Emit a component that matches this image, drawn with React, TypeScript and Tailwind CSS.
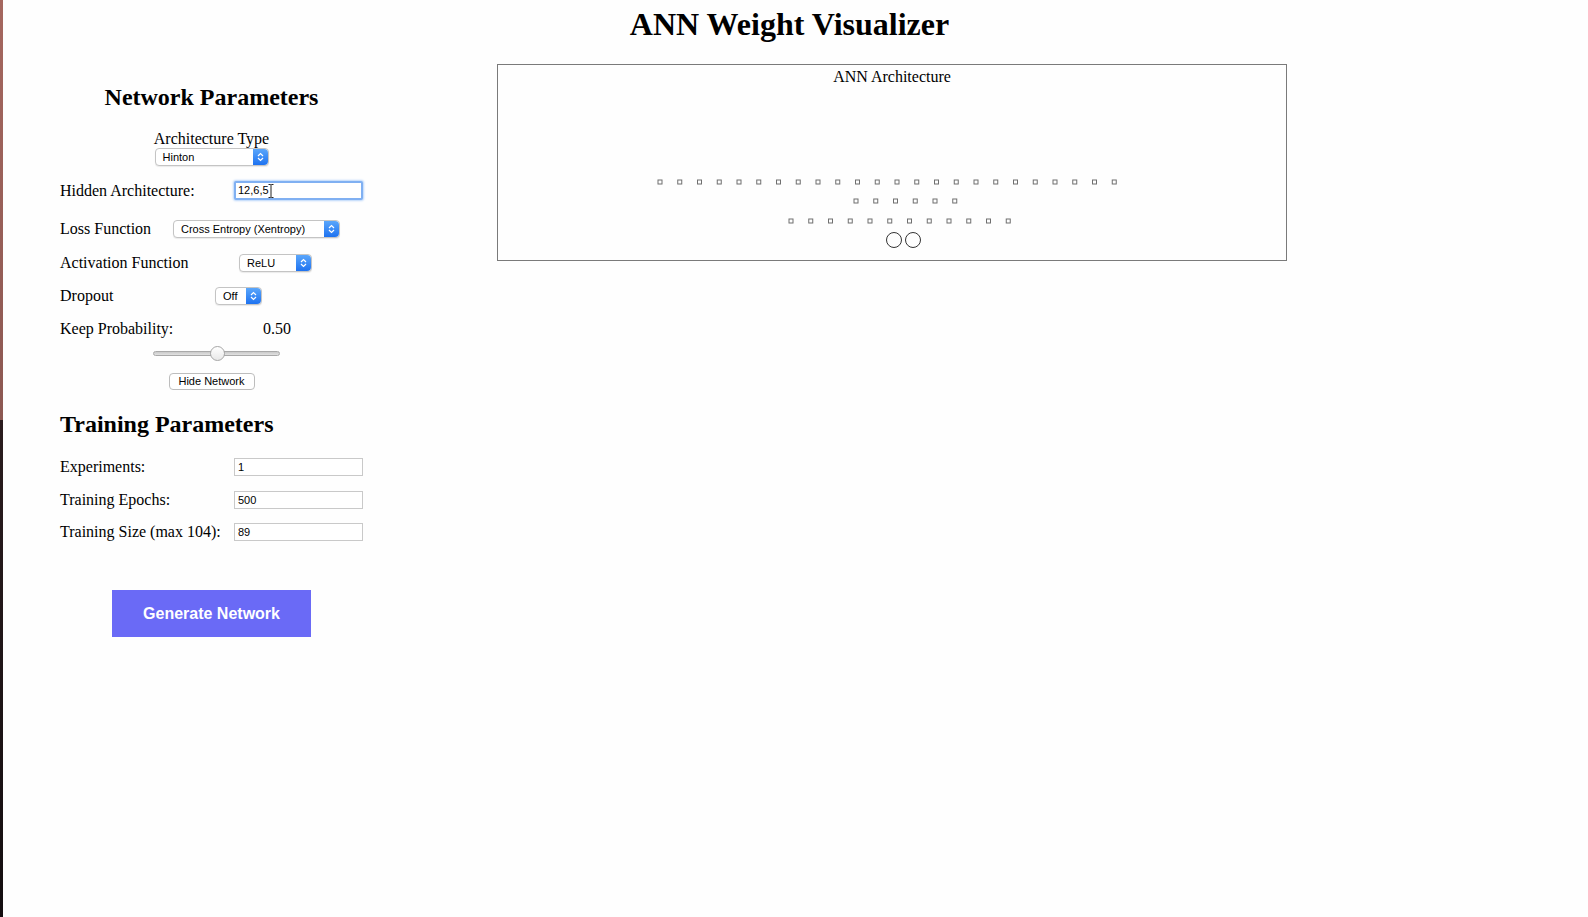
import React from 'react'

const serif = { fontFamily: '"Liberation Serif", "Times New Roman", serif' }
const sans = { fontFamily: '"Liberation Sans", Arial, sans-serif' }

// node rows as seen in the architecture box (x coordinates relative to box)
const rows = [
  { count: 24, start: 162, y: 96 },
  { count: 6, start: 358, y: 115 },
  { count: 12, start: 293, y: 135 },
]

function Stepper() {
  return (
    <div className="flex h-full w-[15px] items-center justify-center rounded-r-[4px] bg-gradient-to-b from-[#5aa6fb] to-[#1d72f0]">
      <svg width="7" height="10" viewBox="0 0 7 10" fill="none">
        <path d="M1 4 L3.5 1.5 L6 4" stroke="white" strokeWidth="1.2" />
        <path d="M1 6 L3.5 8.5 L6 6" stroke="white" strokeWidth="1.2" />
      </svg>
    </div>
  )
}

function Select({ value, width }: { value: string; width: string }) {
  return (
    <div
      className={`flex h-[18px] ${width} items-center rounded-[4px] border border-[#c4c4c4] bg-white shadow-[0_1px_1px_rgba(0,0,0,0.08)]`}
    >
      <span className="flex-1 truncate pl-[7px] text-[11px] leading-none text-black" style={sans}>
        {value}
      </span>
      <Stepper />
    </div>
  )
}

function TextBox({ value }: { value: string }) {
  return (
    <div className="flex h-[18px] w-[129px] items-center border border-[#c9c9c9] bg-white pl-[3px] text-[11px] text-black" style={sans}>
      {value}
    </div>
  )
}

export default function App() {
  return (
    <div className="flex min-h-screen bg-[#fefefe] text-black" style={serif}>
      {/* desktop peeking through at the left edge */}
      <div className="flex w-[3px] shrink-0 flex-col">
        <div className="h-[420px] bg-gradient-to-b from-[#a5675f] to-[#8c5852]" />
        <div className="flex-1 bg-gradient-to-b from-[#2a1c1e] to-[#140e10]" />
      </div>

      <div className="flex-1">
        <h1 className="pt-[5px] text-center text-[32px] font-bold leading-[38px] pr-[12px]">ANN Weight Visualizer</h1>

        <div className="flex">
          {/* Left control panel */}
          <div className="ml-[57px] w-[303px] shrink-0 text-[16px]">
            <h2 className="mt-[40px] text-center text-[24px] font-bold leading-[28px]">Network Parameters</h2>

            <div className="mt-[19px] flex flex-col items-center">
              <div className="leading-[18px]">Architecture Type</div>
              <Select value="Hinton" width="w-[114px]" />
            </div>

            <div className="mt-[15px] flex h-[19px] items-center">
              <div className="w-[174px] leading-[18px]">Hidden Architecture:</div>
              <div className="relative flex h-[19px] w-[129px] items-center rounded-[2px] border-2 border-[#80b0f2] bg-white pl-[2px] text-[11px] shadow-[0_0_2px_1px_#b9d5fa]" style={sans}>
                12,6,5
                <svg className="absolute left-[32px] top-[1px]" width="6" height="14" viewBox="0 0 6 14" fill="none">
                  <path d="M0.5 0.5 H2.5 L3 1 L3.5 0.5 H5.5 M3 1 V13 M0.5 13.5 H2.5 L3 13 L3.5 13.5 H5.5" stroke="#222" strokeWidth="1" />
                </svg>
              </div>
            </div>

            <div className="mt-[20px] flex h-[18px] items-center">
              <div className="w-[113px] leading-[18px]">Loss Function</div>
              <Select value="Cross Entropy (Xentropy)" width="w-[167px]" />
            </div>

            <div className="mt-[16px] flex h-[18px] items-center">
              <div className="w-[179px] leading-[18px]">Activation Function</div>
              <Select value="ReLU" width="w-[73px]" />
            </div>

            <div className="mt-[15px] flex h-[18px] items-center">
              <div className="w-[155px] leading-[18px]">Dropout</div>
              <Select value="Off" width="w-[47px]" />
            </div>

            <div className="mt-[15px] flex h-[18px] items-center">
              <div className="w-[203px] leading-[18px]">Keep Probability:</div>
              <div className="leading-[18px]">0.50</div>
            </div>

            <div className="mt-[8px] flex h-[15px] items-center pl-[93px]">
              <div className="relative h-[5px] w-[127px] rounded-full border border-[#a9a9a9] bg-gradient-to-b from-[#c9c9c9] to-[#e2e2e2]">
                <div className="absolute left-[56px] top-[-6px] h-[15px] w-[15px] rounded-full border border-[#a6a6a6] bg-gradient-to-b from-white to-[#e8e8e8]" />
              </div>
            </div>

            <div className="mt-[12px] flex justify-center">
              <button
                className="h-[17px] w-[86px] rounded-[4px] border border-[#bdbdbd] bg-white text-[11px] leading-none text-black"
                style={sans}
              >
                Hide Network
              </button>
            </div>

            <h2 className="mt-[20px] text-[24px] font-bold leading-[28px]">Training Parameters</h2>

            <div className="mt-[20px] flex h-[18px] items-center">
              <div className="w-[174px] leading-[18px]">Experiments:</div>
              <TextBox value="1" />
            </div>
            <div className="mt-[15px] flex h-[18px] items-center">
              <div className="w-[174px] leading-[18px]">Training Epochs:</div>
              <TextBox value="500" />
            </div>
            <div className="mt-[14px] flex h-[18px] items-center">
              <div className="w-[174px] leading-[18px]">Training Size (max 104):</div>
              <TextBox value="89" />
            </div>

            <div className="mt-[49px] flex justify-center">
              <button
                className="h-[47px] w-[199px] bg-[#6a6af6] text-[16px] font-semibold text-white"
                style={sans}
              >
                Generate Network
              </button>
            </div>
          </div>

          {/* Architecture preview */}
          <div className="ml-[134px] mt-[21px] h-[197px] w-[790px] shrink-0 border border-[#7a7a7a]">
            <div className="pt-[3px] text-center text-[16px] leading-[18px]">ANN Architecture</div>
            <svg width="788" height="173" viewBox="0 0 788 173" className="block">
              {rows.map((r, ri) =>
                Array.from({ length: r.count }).map((_, i) => (
                  <rect
                    key={`${ri}-${i}`}
                    x={r.start + i * 19.75 - 2}
                    y={r.y - 2}
                    width="4"
                    height="4"
                    fill="none"
                    stroke="#6f6f6f"
                    strokeWidth="1"
                  />
                ))
              )}
              <circle cx="396" cy="154" r="7.5" fill="none" stroke="#333" strokeWidth="1" />
              <circle cx="415" cy="154" r="7.5" fill="none" stroke="#333" strokeWidth="1" />
            </svg>
          </div>
        </div>
      </div>
    </div>
  )
}
